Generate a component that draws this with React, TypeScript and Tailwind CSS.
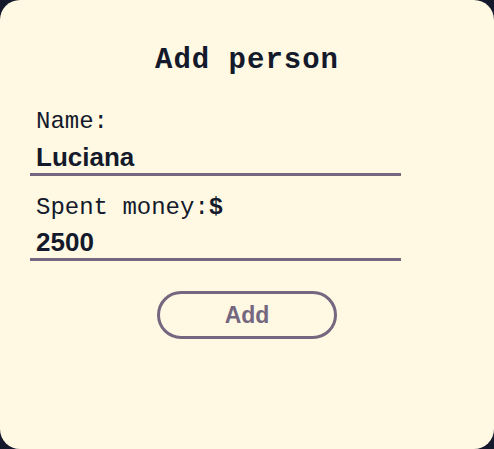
import React, { useState } from 'react';

const mono = { fontFamily: '"Liberation Mono", "DejaVu Sans Mono", monospace' };

const App = () => {
  const [name, setName] = useState('Luciana');
  const [spent, setSpent] = useState('2500');

  return (
    <div className="min-h-screen w-full bg-[#141a2b]">
      <div className="h-[449px] w-full rounded-[20px] bg-[#fff9e3] flex flex-col items-center pt-[43px] font-['Liberation_Sans',Arial,sans-serif] text-[#141a2b]">
        <h2 className="text-[29px] leading-[35px] font-bold tracking-[1px] font-['Liberation_Mono',monospace]">
          Add person
        </h2>

        <form className="self-start ml-[30px] w-[371px] mt-[30px] flex flex-col" onSubmit={(e) => e.preventDefault()}>
          <label htmlFor="name" className="pl-[6px] text-[24px] leading-[28px] font-['Liberation_Mono',monospace]">
            Name:
          </label>
          <input
            id="name"
            value={name}
            onChange={(e) => setName(e.target.value)}
            className="mt-[6px] h-[34px] px-[6px] bg-transparent border-b-[3px] border-[#75677f] text-[26px] font-bold outline-none"
          />

          <label htmlFor="spent" className="mt-[18px] pl-[6px] text-[24px] leading-[28px]" style={mono}>
            Spent money:<span className="font-bold">$</span>
          </label>
          <input
            id="spent"
            value={spent}
            onChange={(e) => setSpent(e.target.value)}
            className="mt-[5px] h-[34px] px-[6px] bg-transparent border-b-[3px] border-[#75677f] text-[26px] font-bold outline-none"
          />
        </form>

        <button className="mt-[30px] w-[180px] h-[48px] rounded-full border-[3px] border-[#75677f] text-[#75677f] text-[23px] font-bold">
          Add
        </button>
      </div>
    </div>
  );
};

export default App;
